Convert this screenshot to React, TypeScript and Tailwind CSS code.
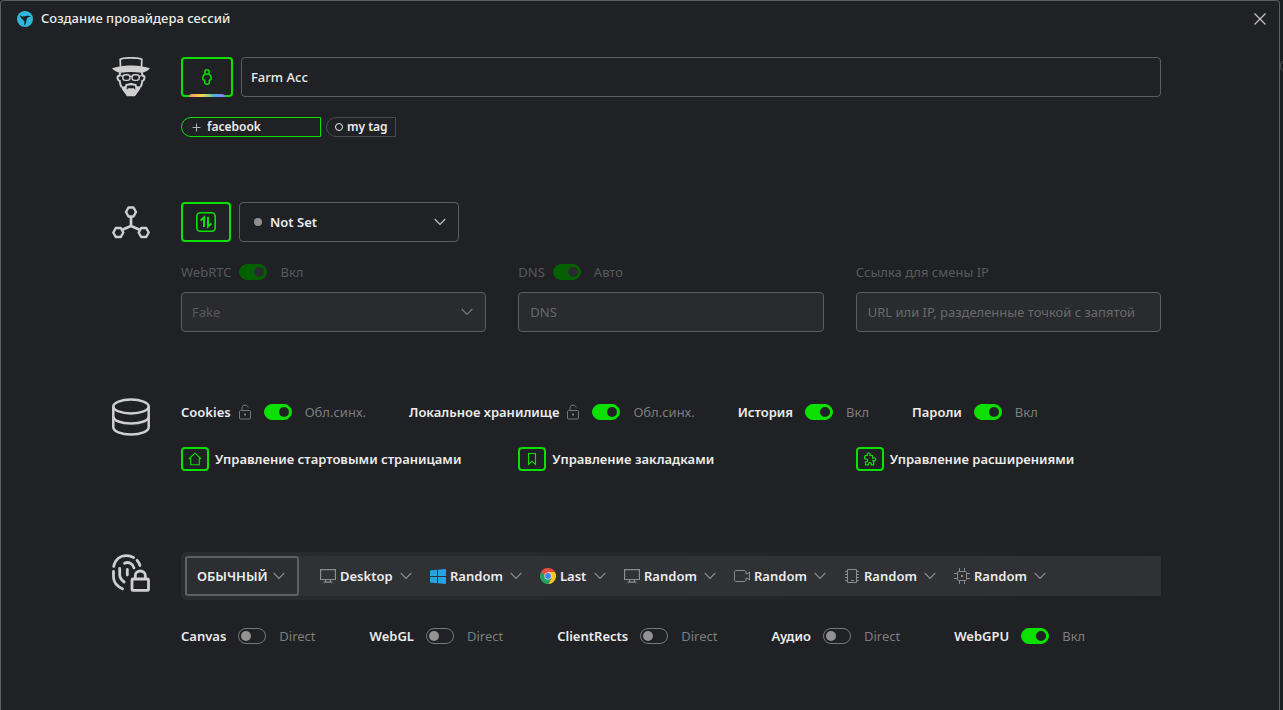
import type { ReactNode } from "react";
import clsx from "clsx";

/* ---------- icons ---------- */

const LogoIcon = () => (
  <svg width="16" height="16" viewBox="0 0 16 16" aria-hidden="true">
    <circle cx="8" cy="8" r="8" fill="#2fb8dc" />
    <path
      d="M2.600 4.200C4.700 5.300 6.300 5.600 8 5.300c2-.6 4.200-.7 6.200.3-1.900.2-3.200.7-4 1.600-.8 1.100-.6 2.200-1 3.700-.3 1.500-1 2.800-2.400 3.700.7-1.800.9-3.400.2-4.900C6 8.700 3.700 7.300 2.600 4.200z"
      fill="#15232b"
    />
  </svg>
);

const CloseIcon = () => (
  <svg width="12" height="12" viewBox="0 0 12 12" fill="none" stroke="#c4c4c6" strokeWidth="1.200">
    <path d="M.5.5l11 11M11.500.5l-11 11" />
  </svg>
);

const FaceIcon = () => (
  <svg width="38" height="40" viewBox="0 0 38 40" fill="none" stroke="#cfcfd0" strokeWidth="1.700" aria-hidden="true">
    <path d="M8.500 10.500L8.200 2.200C11 .8 15 .8 19 .8s8 0 10.800 1.400l-.3 8.300" />
    <path
      d="M0 11.200c2.600-.8 5-1.200 8.200-1.700 3-.7 7-.9 10.800-.9s7.800.2 10.800.9c3.200.5 5.600.9 8.200 1.700-2.400 3-6 4.300-9 4.600-3.300-.6-6.700-.8-10-.8s-6.700.2-10 .8c-3-.3-6.600-1.600-9-4.600z"
      fill="#cfcfd0"
      stroke="none"
    />
    <path
      d="M8.300 15.500c-.7 1.500-.5 2.700-1.300 3.500-1.500-.4-1.800 1-1.300 2.600.4 1.500.9 2.400 2 2.400.3 2.600.8 4.500 1.800 6M29.700 15.500c.7 1.500.5 2.700 1.300 3.500 1.500-.4 1.800 1 1.300 2.600-.4 1.500-.9 2.400-2 2.400-.3 2.600-.8 4.500-1.800 6"
      strokeWidth="2"
    />
    <rect x="10.800" y="17.800" width="7.200" height="5.600" rx="2.600" strokeWidth="1.400" />
    <rect x="20" y="17.800" width="7.200" height="5.600" rx="2.600" strokeWidth="1.400" />
    <path d="M8 18.500l2.800.8M30 18.500l-2.800.8M18 19.600q1-.6 2 0" strokeWidth="1.200" />
    <path
      fillRule="evenodd"
      d="M9 28.500c1.700 1.300 3.200 1 4.300.4L13.600 27c3-.3 3.600-1 5.400-1s2.400.7 5.400 1l.3 1.900c1.100.6 2.600.9 4.300-.4-.3 2.500-1.300 4.500-2.600 6L23 39.300h-8l-3.400-4.800C10.300 33 9.300 31 9 28.500zM15 28.700l-.4 4 1.700-1.500h5.400l1.700 1.500-.4-4c-2.600.2-3-.4-4-.4s-1.400.6-4 .4z"
      fill="#cfcfd0"
      stroke="none"
    />
  </svg>
);

const NetworkIcon = () => (
  <svg width="38" height="34" viewBox="0 0 38 34" fill="none" stroke="#cfcfd0" strokeWidth="2.400" strokeLinejoin="round" aria-hidden="true">
    <path d="M16.500 1.500h5l2.500 4.500-2.500 4.500h-5L14 6z" />
    <path d="M3.800 22h5l2.500 4.500L8.800 31h-5l-2.500-4.500z" />
    <path d="M29.200 22h5l2.500 4.500-2.500 4.500h-5l-2.500-4.500z" />
    <path d="M19 10.500V20M10.300 23.800L19 20l8.700 3.800" strokeWidth="2.700" />
  </svg>
);

const DatabaseIcon = () => (
  <svg width="38" height="38" viewBox="0 0 38 38" fill="none" stroke="#cfcfd0" strokeWidth="2.500" aria-hidden="true">
    <ellipse cx="19" cy="8.500" rx="17.700" ry="7" />
    <path d="M1.300 8.500v20.800c0 4 7.700 7.200 17.700 7.200s17.700-3.200 17.700-7.200V8.500" />
    <path d="M1.300 18.500c0 4 7.700 7 17.700 7s17.700-3 17.700-7" />
  </svg>
);

const FingerprintIcon = () => (
  <svg
    width="38"
    height="38"
    viewBox="0 0 38 38"
    fill="none"
    stroke="#cfcfd0"
    strokeWidth="2.800"
    strokeLinecap="round"
    aria-hidden="true"
  >
    <path d="M1.700 12.500C3.200 5.300 8.500 1.600 14.500 1.600c2.800 0 5 .6 7.200 2" />
    <path d="M25 6.300c1.400 1.500 2.400 3.200 3 5.200" />
    <path d="M1.500 17.500v6c.3 5 4 9 9 11.300" />
    <path d="M7.700 14.500v6c0 3 1.700 5.500 4.500 7.500" />
    <path d="M12.500 9.300c4-2 8.500.2 9.500 4.700" />
    <path d="M15.300 15.500v5.500" />
    <rect x="20" y="25" width="16.500" height="11.400" rx="1" />
    <path d="M23.300 24.700v-3c0-2.800 2.200-4.700 5-4.700s5 1.900 5 4.700v3" />
  </svg>
);

const PersonIcon = () => (
  <svg width="10" height="16" viewBox="0 0 10 16" fill="none" stroke="#0be000" strokeWidth="1.500" strokeLinejoin="round" aria-hidden="true">
    <circle cx="5" cy="3" r="2.200" />
    <path d="M3 5.300C1.500 5.900.8 7.300.8 9.200c0 1.200.6 2 1.900 2.100v2.200c0 1.200.8 1.700 2.300 1.700s2.300-.5 2.300-1.700v-2.200c1.300-.1 1.900-.9 1.900-2.100 0-1.900-.7-3.300-2.200-3.900" />
  </svg>
);

const ProxyIcon = () => (
  <svg width="20" height="20" viewBox="0 0 20 20" fill="none" stroke="#0be000" strokeWidth="1.600" aria-hidden="true">
    <rect x=".8" y=".8" width="18.400" height="18.400" rx="3.500" />
    <path d="M4.500 8.500L8 5.500V15M12 5v9.500l3.500-3" strokeWidth="2" />
  </svg>
);

const Chevron = ({ className }: { className?: string }) => (
  <svg className={className} width="12" height="8" viewBox="0 0 12 8" fill="none" stroke="currentColor" strokeWidth="1.200" aria-hidden="true">
    <path d="M.7 1L6 6.500 11.300 1" />
  </svg>
);

const UnlockIcon = () => (
  <svg width="12" height="16" viewBox="0 0 12 16" fill="none" stroke="#77787a" aria-hidden="true">
    <rect x=".5" y="6.500" width="11" height="8.500" rx="1" />
    <path d="M3 6.500V4c0-1.700 1.200-2.900 3-2.900S8.800 2 9 3.500" />
    <path d="M5 10.500h2" strokeWidth="2" />
  </svg>
);

const HomeIcon = () => (
  <svg width="14" height="14" viewBox="0 0 14 14" fill="none" stroke="#0be000" strokeWidth="1.100">
    <path d="M.8 7L7 1.200 13.200 7M2.700 6v6.800h8.600V6" />
  </svg>
);

const BookmarkIcon = () => (
  <svg width="14" height="14" viewBox="0 0 14 14" fill="none" stroke="#0be000" strokeWidth="1.100">
    <path d="M3.500 1.500h7v11L7 9.200l-3.500 3.300z" />
  </svg>
);

const PuzzleIcon = () => (
  <svg width="14" height="14" viewBox="0 0 14 14" fill="none" stroke="#0be000" strokeWidth="1.200" strokeLinejoin="round">
    <path d="M2.500 3.500h2C3.700 1.800 4.600 1 5.700 1s2 .8 1.200 2.500h2.700v2.800c1.700-.9 3.200-.3 3.200 1s-1.500 1.900-3.200 1.200l1 1.200v3.100H8.200c.3-1.500-.3-2.200-1.300-2.200s-1.600.7-1.300 2.200H2.500v-3c1.400.3 2.100-.4 2.100-1.400S3.900 6.900 2.500 7.200C1 6.500 1.300 4.500 2.500 3.500z" />
  </svg>
);

const MonitorIcon = () => (
  <svg width="16" height="14" viewBox="0 0 16 14" fill="none" stroke="#8b8c8e" strokeWidth="1.200" aria-hidden="true">
    <path d="M.6.6h14.800v9.900H.6zM5.500 10.500v2M10.500 10.500v2M3.500 13.200h9" />
  </svg>
);

const WindowsIcon = () => (
  <svg width="16" height="15" viewBox="0 0 16 15" fill="#22a6e2" aria-hidden="true">
    <path d="M0 1.500L7 .8V7H0zM8 .7L16 0v7H8zM0 8h7v6.200l-7-.7zM8 8h8v7l-8-.7z" />
  </svg>
);

const ChromeIcon = () => (
  <svg width="16" height="16" viewBox="0 0 16 16" aria-hidden="true">
    <path d="M8 8L1.070 4A8 8 0 0 1 14.930 4z" fill="#ea4c3f" />
    <path d="M8 8V4h6.930A8 8 0 0 1 8 16l3.460-6z" fill="#fcc31e" />
    <path d="M1.070 4A8 8 0 0 0 8 16l3.460-6H8L4.540 10z" fill="#1fa463" />
    <path d="M1.070 4l3.470 6L8 4z" fill="#ea4c3f" />
    <path d="M1.070 4l3.470 6L5 7z" fill="#1fa463" />
    <circle cx="8" cy="8" r="3.600" fill="#f1f1f1" />
    <circle cx="8" cy="8" r="3" fill="#3f86f0" />
  </svg>
);

const CameraIcon = () => (
  <svg width="16" height="12" viewBox="0 0 16 12" fill="none" stroke="#8b8c8e" aria-hidden="true">
    <path d="M12 4V1.500l-1-1H1.500l-1 1v9l1 1H11l1-1V8M12 4h1l2.500-2v8L13 8h-1" />
  </svg>
);

const MemoryIcon = () => (
  <svg width="16" height="16" viewBox="0 0 16 16" fill="none" stroke="#8b8c8e" aria-hidden="true">
    <path d="M3.500 1.500h9v13h-9zM1 3.500h2.500M1 6.500h2.500M1 9.500h2.500M1 12.500h2.500M12.500 3.500H15M12.500 6.500H15M12.500 9.500H15M12.500 12.500H15M7 12.500h3" />
  </svg>
);

const CpuIcon = () => (
  <svg width="16" height="16" viewBox="0 0 16 16" fill="none" stroke="#8b8c8e" aria-hidden="true">
    <rect x="3.500" y="3.500" width="9" height="9" rx="1" />
    <path d="M5.500 3.500V0M10.500 3.500V0M5.500 16v-3.500M10.500 16v-3.500M0 5.500h3.500M0 10.500h3.500M12.500 5.500H16M12.500 10.500H16" />
    <path d="M7 8h2" strokeWidth="2" />
  </svg>
);

/* ---------- controls ---------- */

type SwitchProps = {
  label: string;
  state: string;
  on?: boolean;
  disabled?: boolean;
  lock?: boolean;
};

const SwitchField = ({ label, state, on, disabled, lock }: SwitchProps) => (
  <label className="flex h-5 items-center whitespace-nowrap">
    <span className={disabled ? "text-[#58595b]" : "font-semibold text-[#ececec]"}>{label}</span>
    {lock && (
      <span className="ml-2">
        <UnlockIcon />
      </span>
    )}
    <input
      type="checkbox"
      role="switch"
      defaultChecked={on}
      disabled={disabled}
      className={clsx(
        "mr-[13px] flex h-4 w-7 shrink-0 appearance-none items-center rounded-full border border-[#77787a] px-0.5",
        "before:size-2.5 before:rounded-full before:bg-[#929292] before:content-['']",
        "checked:justify-end checked:border-[#0be000] checked:bg-[#0be000] checked:before:bg-[#202124]",
        "disabled:checked:border-[#046000] disabled:checked:bg-[#046000] disabled:checked:before:bg-[#2a2b2e]",
        lock ? "ml-[13px]" : disabled ? "ml-2" : "ml-3"
      )}
    />
    <span className={disabled ? "text-[#58595b]" : "text-[#7c7d7f]"}>{state}</span>
  </label>
);

const ManageButton = ({ icon, children }: { icon: ReactNode; children: ReactNode }) => (
  <button type="button" className="flex h-6 items-center gap-1.5 whitespace-nowrap font-semibold text-[#ececec]">
    <span className="flex h-6 w-7 items-center justify-center rounded-[4px] border-2 border-[#0be000]">{icon}</span>
    {children}
  </button>
);

type PickerProps = { name: string; value: string; icon: ReactNode };

const Picker = ({ name, value, icon }: PickerProps) => (
  <label className="relative flex items-center gap-1">
    <span className="flex w-4 justify-center">{icon}</span>
    <select aria-label={name} className="h-10 appearance-none bg-transparent pr-[19px] font-semibold text-[#ececec]">
      <option>{value}</option>
    </select>
    <Chevron className="pointer-events-none absolute right-0 text-[#8b8c8e]" />
  </label>
);

const Section = ({ icon, className, children }: { icon: ReactNode; className?: string; children: ReactNode }) => (
  <section className={clsx("flex items-start gap-[31px]", className)}>
    <div className="w-[38px] shrink-0">{icon}</div>
    <div className="min-w-0 flex-1">{children}</div>
  </section>
);

const pickers: PickerProps[] = [
  { name: "Device", value: "Desktop", icon: <MonitorIcon /> },
  { name: "OS", value: "Random", icon: <WindowsIcon /> },
  { name: "Browser", value: "Last", icon: <ChromeIcon /> },
  { name: "Screen", value: "Random", icon: <MonitorIcon /> },
  { name: "Camera", value: "Random", icon: <CameraIcon /> },
  { name: "Memory", value: "Random", icon: <MemoryIcon /> },
  { name: "CPU", value: "Random", icon: <CpuIcon /> },
];

const fieldClass =
  "h-10 w-full rounded-[4px] border border-[#5c5d60] bg-[#2a2b2e] text-[#58595b] placeholder:text-[#68696b]";

export default function App() {
  return (
    <div className="flex min-h-screen overflow-hidden bg-[#1c1d20] font-['Noto_Sans','Open_Sans',sans-serif] text-[13px] leading-5">
      <main className="flex-1 rounded-t-[4px] border border-b-0 border-[#5c5d60] bg-[#202124]">
        <header className="flex h-9 items-center justify-between pr-[13px] pl-4">
          <h1 className="flex items-center gap-2 font-medium text-[#ececec]">
            <LogoIcon />
            <span className="pb-0.5">Создание провайдера сессий</span>
          </h1>
          <button type="button" aria-label="Закрыть">
            <CloseIcon />
          </button>
        </header>

        <form className="pt-5 pr-[118px] pb-16 pl-[111px]">
          <Section icon={<FaceIcon />}>
            <div className="flex gap-2">
              <button
                type="button"
                aria-label="Аватар"
                className="relative flex h-10 w-[52px] items-center justify-center rounded-[4px] border-2 border-[#0be000]"
              >
                <PersonIcon />
                <span className="absolute inset-x-1.5 -bottom-0.5 flex h-[3px] overflow-hidden rounded-t-[3px]">
                  <span className="flex-1 bg-linear-to-r from-[#ff8a7a] to-[#ffd23c]" />
                  <span className="flex-1 bg-linear-to-r from-[#ffd23c] to-[#3fc9a0]" />
                  <span className="flex-1 bg-linear-to-r from-[#3fb0e8] to-[#8b7bff]" />
                </span>
              </button>
              <input
                type="text"
                aria-label="Название"
                defaultValue="Farm Acc"
                className="h-10 min-w-0 flex-1 rounded-[4px] border border-[#5c5d60] bg-transparent px-[9px] font-medium text-[#ececec]"
              />
            </div>
            <div className="mt-5 flex gap-[5px]">
              <label className="flex h-5 w-[140px] items-center gap-1.5 rounded-l-full rounded-r-[2px] border border-[#0be000] pl-2.5">
                <svg width="9" height="9" viewBox="0 0 9 9" stroke="#b5b5b6" aria-hidden="true">
                  <path d="M4.500.5v8M.5 4.500h8" />
                </svg>
                <input
                  type="text"
                  aria-label="Тег"
                  defaultValue="facebook"
                  className="h-4 min-w-0 flex-1 bg-transparent text-xs font-semibold text-[#ececec]"
                />
              </label>
              <button
                type="button"
                className="flex h-5 w-[70px] items-center gap-1 rounded-l-full rounded-r-[2px] border border-[#4a4b4e] pl-2 text-xs font-semibold whitespace-nowrap text-[#ececec]"
              >
                <span className="size-2 rounded-full border border-[#ececec]" />
                my tag
              </button>
            </div>
          </Section>

          <Section icon={<div className="pt-1"><NetworkIcon /></div>} className="mt-[65px]">
            <div className="flex gap-2">
              <button
                type="button"
                aria-label="Прокси"
                className="flex h-10 w-[50px] items-center justify-center rounded-[4px] border-2 border-[#0be000]"
              >
                <ProxyIcon />
              </button>
              <div className="relative flex w-[220px] items-center">
                <span className="absolute left-[15px] size-2 rounded-full bg-[#8f8f90]" />
                <select
                  aria-label="Прокси"
                  className="h-10 w-full appearance-none rounded-[4px] border border-[#5c5d60] bg-transparent pl-[30px] font-semibold text-[#ececec]"
                >
                  <option>Not Set</option>
                </select>
                <Chevron className="pointer-events-none absolute right-[13px] text-[#c4c4c6]" />
              </div>
            </div>
            <div className="mt-5 grid grid-cols-3 gap-8">
              <div>
                <SwitchField label="WebRTC" state="Вкл" on disabled />
                <div className="relative mt-2.5 flex items-center">
                  <select aria-label="WebRTC" disabled className={clsx(fieldClass, "appearance-none px-2.5 opacity-100")}>
                    <option>Fake</option>
                  </select>
                  <Chevron className="pointer-events-none absolute right-[13px] text-[#77787a]" />
                </div>
              </div>
              <div>
                <SwitchField label="DNS" state="Авто" on disabled />
                <input type="text" aria-label="DNS" placeholder="DNS" disabled className={clsx(fieldClass, "mt-2.5 px-[11px]")} />
              </div>
              <div>
                <label htmlFor="ip-link" className="block h-5 text-[#58595b]">
                  Ссылка для смены IP
                </label>
                <input
                  id="ip-link"
                  type="text"
                  placeholder="URL или IP, разделенные точкой с запятой"
                  disabled
                  className={clsx(fieldClass, "mt-2.5 px-[11px]")}
                />
              </div>
            </div>
          </Section>

          <Section icon={<DatabaseIcon />} className="mt-[66px]">
            <div className="flex gap-[43px] pt-1">
              <SwitchField label="Cookies" state="Обл.синх." on lock />
              <SwitchField label="Локальное хранилище" state="Обл.синх." on lock />
              <SwitchField label="История" state="Вкл" on />
              <SwitchField label="Пароли" state="Вкл" on />
            </div>
            <div className="mt-[25px] grid grid-cols-3 gap-8">
              <ManageButton icon={<HomeIcon />}>Управление стартовыми страницами</ManageButton>
              <ManageButton icon={<BookmarkIcon />}>Управление закладками</ManageButton>
              <ManageButton icon={<PuzzleIcon />}>Управление расширениями</ManageButton>
            </div>
          </Section>

          <Section icon={<div className="pt-0.5"><FingerprintIcon /></div>} className="mt-[81px]">
            <div className="rounded-l-[6px] bg-linear-to-r from-[#2b2c2f] to-[#202124] py-1 pl-1">
              <div className="flex h-10 items-center bg-[#303134]">
                <div className="relative flex items-center">
                  <select
                    aria-label="Режим"
                    className="h-10 w-[114px] appearance-none rounded-[3px] border-2 border-[#5f6063] bg-[#2d2e31] pl-2.5 font-semibold text-[#ececec]"
                  >
                    <option>ОБЫЧНЫЙ</option>
                  </select>
                  <Chevron className="pointer-events-none absolute right-[14px] text-[#8b8c8e]" />
                </div>
                <div className="ml-[21px] flex gap-[18px]">
                  {pickers.map((p) => (
                    <Picker key={p.name} {...p} />
                  ))}
                </div>
              </div>
            </div>
            <div className="mt-[26px] flex gap-[54px]">
              <SwitchField label="Canvas" state="Direct" />
              <SwitchField label="WebGL" state="Direct" />
              <SwitchField label="ClientRects" state="Direct" />
              <SwitchField label="Аудио" state="Direct" />
              <SwitchField label="WebGPU" state="Вкл" on />
            </div>
          </Section>
        </form>
      </main>
      {/* edge of the window behind the dialog */}
      <div className="w-[3px] shrink-0 overflow-hidden pt-[61px]">
        <div className="h-2.5 w-4 rounded-[3px] border border-[#4a4b4e]" />
      </div>
    </div>
  );
}
